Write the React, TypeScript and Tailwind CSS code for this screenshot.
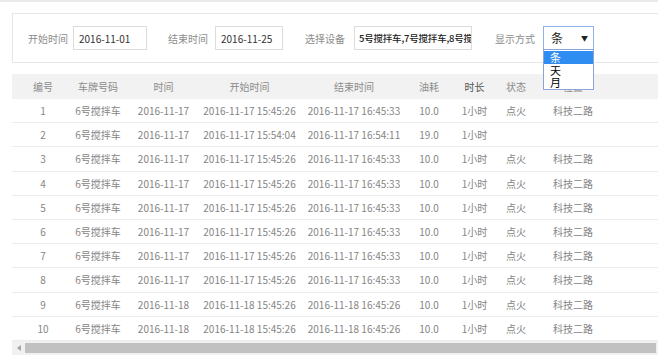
import React from 'react';

const cols = 'grid grid-cols-[62px_48px_83px_89px_120px_30px_61px_22px_92px_1fr]';

const heads = ['编号', '车牌号码', '时间', '开始时间', '结束时间', '油耗', '时长', '状态', '位置'];

type Row = {
  id: number;
  day: string;
  start: string;
  end: string;
  oil: string;
  state: string;
  place: string;
};

const rows: Row[] = [
  { id: 1, day: '2016-11-17', start: '2016-11-17 15:45:26', end: '2016-11-17 16:45:33', oil: '10.0', state: '点火', place: '科技二路' },
  { id: 2, day: '2016-11-17', start: '2016-11-17 15:54:04', end: '2016-11-17 16:54:11', oil: '19.0', state: '', place: '' },
  { id: 3, day: '2016-11-17', start: '2016-11-17 15:45:26', end: '2016-11-17 16:45:33', oil: '10.0', state: '点火', place: '科技二路' },
  { id: 4, day: '2016-11-17', start: '2016-11-17 15:45:26', end: '2016-11-17 16:45:33', oil: '10.0', state: '点火', place: '科技二路' },
  { id: 5, day: '2016-11-17', start: '2016-11-17 15:45:26', end: '2016-11-17 16:45:33', oil: '10.0', state: '点火', place: '科技二路' },
  { id: 6, day: '2016-11-17', start: '2016-11-17 15:45:26', end: '2016-11-17 16:45:33', oil: '10.0', state: '点火', place: '科技二路' },
  { id: 7, day: '2016-11-17', start: '2016-11-17 15:45:26', end: '2016-11-17 16:45:33', oil: '10.0', state: '点火', place: '科技二路' },
  { id: 8, day: '2016-11-17', start: '2016-11-17 15:45:26', end: '2016-11-17 16:45:33', oil: '10.0', state: '点火', place: '科技二路' },
  { id: 9, day: '2016-11-18', start: '2016-11-18 15:45:26', end: '2016-11-18 16:45:26', oil: '10.0', state: '点火', place: '科技二路' },
  { id: 10, day: '2016-11-18', start: '2016-11-18 15:45:26', end: '2016-11-18 16:45:26', oil: '10.0', state: '点火', place: '科技二路' },
];

const Cell: React.FC<{ children?: React.ReactNode; className?: string }> = ({ children, className = '' }) => (
  <div className={`flex items-center justify-center whitespace-nowrap ${className}`}>{children}</div>
);

export default function App() {
  return (
    <div className="w-[658px] h-[361px] overflow-hidden bg-white text-[10px] font-['Noto_Sans_CJK_SC','Liberation_Sans',sans-serif]">
      <div className="h-[2px] bg-[#e9e9e9]" />

      {/* filter bar */}
      <div className="pt-[11px] pl-[12px]">
        <div className="h-[50px] w-[720px] border border-[#e6e6e6] flex items-center pl-[15px]">
          <span className="w-[38px] whitespace-nowrap text-[#8c8c8c]">开始时间</span>
          <div className="ml-[7px] w-[74px] h-[24px] border border-[#dcdcdc] flex items-center pl-[5px] text-[#333]">
            2016-11-01
          </div>
          <span className="ml-[21px] w-[38px] whitespace-nowrap text-[#8c8c8c]">结束时间</span>
          <div className="ml-[9px] w-[68px] h-[24px] border border-[#dcdcdc] flex items-center pl-[5px] text-[#333]">
            2016-11-25
          </div>
          <span className="ml-[22px] w-[38px] whitespace-nowrap text-[#8c8c8c]">选择设备</span>
          <div className="ml-[11px] w-[118px] h-[24px] border border-[#dcdcdc] flex items-center pl-[4px] text-[#222] font-medium text-[9.5px] tracking-[-0.2px] overflow-hidden whitespace-nowrap">
            5号搅拌车,7号搅拌车,8号搅拌车
          </div>
          <span className="ml-[23px] w-[38px] whitespace-nowrap text-[#8c8c8c]">显示方式</span>
          <div className="relative ml-[10px]">
            <div className="w-[51px] h-[24px] border border-[#8fb3e6] flex items-center justify-between pl-[7px] pr-[5px] text-[12px] text-[#222]">
              <span>条</span>
              <span className="text-[7px]">▼</span>
            </div>
            <div className="absolute left-0 top-[23px] w-[51px] border border-[#8aa6d6] bg-white text-[11px] leading-[12px] text-black z-10 py-[1px]">
              <div className="bg-[#2f8cf0] text-white pl-[6px] h-[13px] leading-[13px]">条</div>
              <div className="pl-[6px] h-[12px]">天</div>
              <div className="pl-[6px] h-[12px]">月</div>
            </div>
          </div>
        </div>
      </div>

      {/* table */}
      <div className="mt-[11px] ml-[12px] w-[720px]">
        <div className={`${cols} h-[25px] bg-[#f2f2f2] text-[#8c8c8c]`}>
          {heads.map((h) => (
            <Cell key={h} className={h === '时长' ? 'text-[#555]' : ''}>
              {h}
            </Cell>
          ))}
          <div />
        </div>
        {rows.map((r) => (
          <div key={r.id} className={`${cols} h-[24.2px] border-b border-[#ececec] text-[#858585]`}>
            <Cell>{r.id}</Cell>
            <Cell>6号搅拌车</Cell>
            <Cell>{r.day}</Cell>
            <Cell>{r.start}</Cell>
            <Cell>{r.end}</Cell>
            <Cell>{r.oil}</Cell>
            <Cell>1小时</Cell>
            <Cell>{r.state}</Cell>
            <Cell>{r.place}</Cell>
            <div />
          </div>
        ))}

        {/* horizontal scrollbar */}
        <div className="h-[14px] bg-[#f1f1f1] flex items-center py-[2px]">
          <div className="w-[13px] flex items-center justify-center">
            <svg width="4" height="6" viewBox="0 0 4 6">
              <path d="M4 0L0 3L4 6Z" fill="#a3a3a3" />
            </svg>
          </div>
          <div className="w-[631px] h-[10px] bg-[#c1c1c1]" />
        </div>
      </div>
    </div>
  );
}
